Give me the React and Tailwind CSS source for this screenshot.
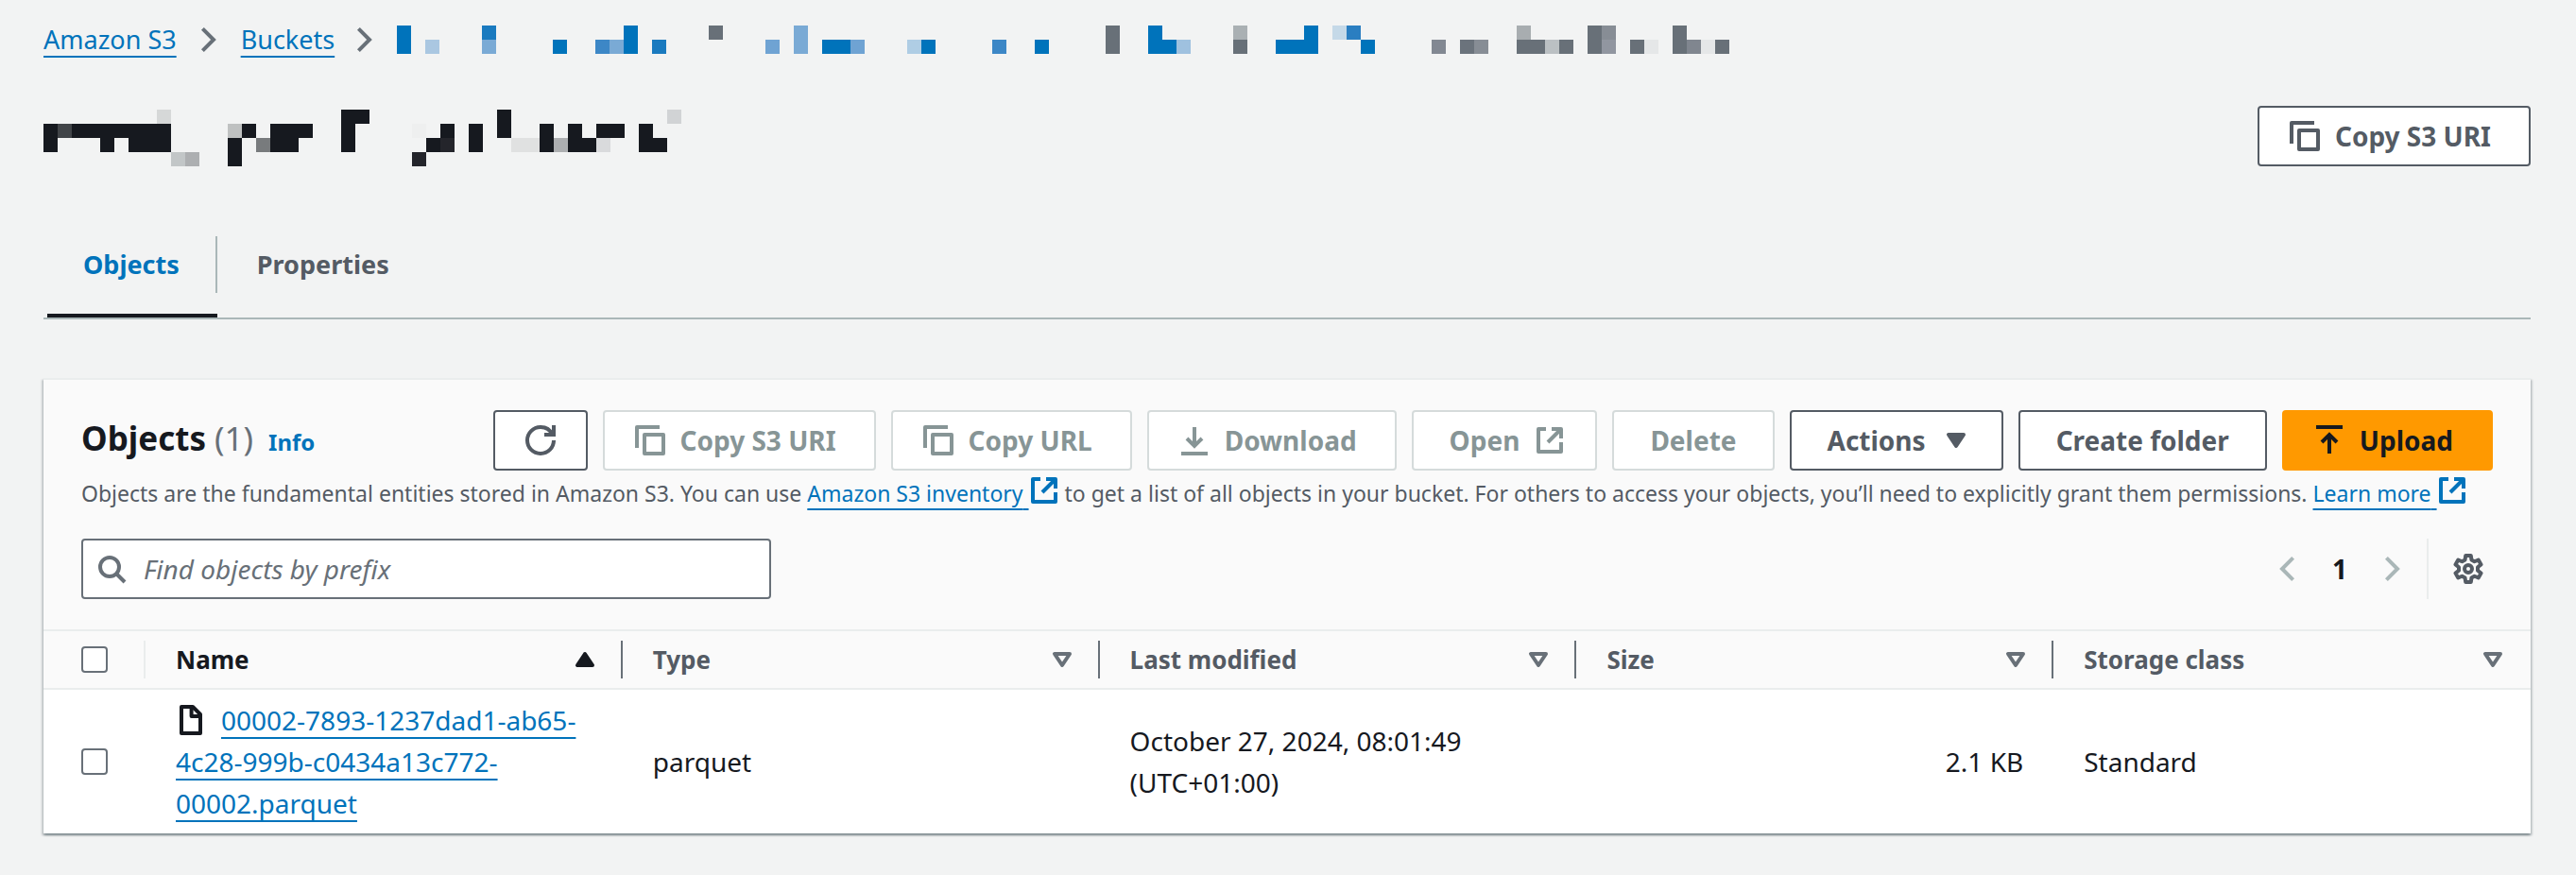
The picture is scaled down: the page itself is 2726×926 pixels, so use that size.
import { useState } from "react";

const INK = "#16191f";
const BLUE = "#0073bb";
const GRAY = "#687078";

// [column, row, colour, columns wide, rows tall]
const pathBlocks = [
  [0, 0, BLUE, 1, 2], [2, 1, "#aac7e1"], [6, 0, "#1a7abf"], [6, 1, "#7aaad5"],
  [11, 1, BLUE], [14, 1, "#3d87c6"], [15, 1, "#7aaad5"], [16, 0, BLUE, 1, 2],
  [18, 1, "#1a7abf"], [22, 0, GRAY], [26, 1, "#6fa3d3"], [28, 0, "#7aaad5", 1, 2],
  [30, 1, BLUE, 2], [32, 1, "#6fa3d3"], [36, 1, "#afcde4"], [37, 1, BLUE],
  [42, 1, "#3d87c6"], [45, 1, BLUE], [50, 0, GRAY, 1, 2], [53, 0, BLUE, 1, 2],
  [54, 1, BLUE], [55, 1, "#9fc1df"], [59, 0, "#aab0b3"], [59, 1, GRAY],
  [62, 1, BLUE, 2], [64, 0, BLUE, 1, 2], [66, 0, "#c5d9e8"], [67, 0, "#2a7ec1"],
  [68, 1, BLUE], [73, 1, "#828892"], [75, 1, "#6b737c"], [76, 1, "#878d95"],
  [79, 0, "#a8adb0"], [79, 1, GRAY, 2], [81, 1, "#bbc0c3"], [82, 1, GRAY],
  [84, 0, GRAY, 1, 2], [85, 0, "#878d95"], [85, 1, "#9196a0"], [87, 1, GRAY],
  [88, 1, "#e5e7e8"], [90, 0, GRAY, 1, 2], [91, 1, "#80868f"], [92, 1, "#e5e7e8"],
  [93, 1, GRAY],
];

const titleBlocks = [
  [8, 0, "#d6d8d8"], [21, 0, INK, 2], [32, 0, INK, 1, 2], [44, 0, "#d1d3d5"],
  [0, 1, INK, 1, 2], [1, 1, "#414448"], [2, 1, INK, 7], [13, 1, "#bfc1c1"],
  [14, 1, INK], [16, 1, INK, 3], [21, 1, INK, 1, 2], [26, 1, "#eeefef"],
  [28, 1, INK], [30, 1, INK, 1, 2], [35, 1, INK, 1, 2], [37, 1, INK, 1, 2],
  [39, 1, INK, 2], [42, 1, INK, 1, 2], [4, 2, INK], [6, 2, INK, 3],
  [13, 2, INK, 1, 2], [15, 2, "#787b7d"], [16, 2, INK, 2], [27, 2, INK],
  [28, 2, "#24252b"], [33, 2, "#e0e1e1", 2], [36, 2, "#adafb1"], [38, 2, INK],
  [39, 2, "#d9dadc"], [43, 2, INK], [9, 3, "#c2c6c7"], [10, 3, "#adafb1"],
  [26, 3, "#24252b"],
];

function Mosaic({ blocks, cols, rows }) {
  return (
    <svg
      width={cols * 15}
      height={rows * 15}
      viewBox={`0 0 ${cols} ${rows}`}
      shapeRendering="crispEdges"
      aria-hidden="true"
      className="shrink-0"
    >
      {blocks.map(([x, y, fill, w = 1, h = 1]) => (
        <rect key={`${x}-${y}`} x={x} y={y} width={w} height={h} fill={fill} />
      ))}
    </svg>
  );
}

const icons = {
  copy: (
    <>
      <path d="M1 12V1h12" />
      <path d="M5 5h10v10H5z" />
    </>
  ),
  refresh: (
    <>
      <path d="M10 5h5V0" strokeLinejoin="miter" />
      <path d="M15 8a6.957 6.957 0 0 1-7 7 6.957 6.957 0 0 1-7-7 6.957 6.957 0 0 1 7-7 6.87 6.87 0 0 1 6.3 4" />
    </>
  ),
  external: (
    <>
      <path d="M9 2h5v5" />
      <path d="m7 9 7-7" />
      <path d="M14 9.05V14H2V2h4" />
    </>
  ),
  download: (
    <>
      <path d="M1 15h14" />
      <path d="M8 1v10" />
      <path d="m4 7 4 4 4-4" strokeLinejoin="miter" />
    </>
  ),
  upload: (
    <>
      <path d="M1 1h14" />
      <path d="M8 15V5" />
      <path d="m4 9 4-4 4 4" strokeLinejoin="miter" />
    </>
  ),
  search: (
    <>
      <circle cx="7" cy="7" r="5" />
      <path d="m15 15-4.5-4.5" />
    </>
  ),
  right: <path d="M4.7 2.2 10.5 8l-5.800 5.800" strokeLinejoin="miter" />,
  left: <path d="M11.300 2.200 5.500 8l5.800 5.800" strokeLinejoin="miter" />,
  file: (
    <>
      <path d="M3 1h6l4 4v10H3z" />
      <path d="M8.300 1v5H13" />
    </>
  ),
  caret: <path d="M4 5h8l-4 6z" fill="currentColor" />,
  sortUp: <path d="M4 11h8L8 5z" fill="currentColor" />,
  sort: <path d="M4 5h8l-4 6z" />,
  gear: (
    <>
      <path d="M6.600 1h2.800l.32 2.220 1.560.9 2.080-.83 1.400 2.420L13 7.100v1.800l1.760 1.390-1.400 2.420-2.080-.83-1.560.9L9.400 15H6.600l-.32-2.220-1.560-.9-2.080.83-1.400-2.420L3 8.900V7.100L1.240 5.710l1.400-2.420 2.080.83 1.560-.9z" />
      <circle cx="8" cy="8" r="2" />
    </>
  ),
};

function Icon({ name, className = "" }) {
  return (
    <svg
      viewBox="0 0 16 16"
      fill="none"
      stroke="currentColor"
      strokeWidth="2"
      strokeLinejoin="round"
      aria-hidden="true"
      className={`inline-block size-8 shrink-0 ${className}`}
    >
      {icons[name]}
    </svg>
  );
}

function Button({ icon, iconAfter, primary, disabled, children }) {
  const tone = primary
    ? "border-[#ff9900] bg-[#ff9900] text-[#16191f]"
    : disabled
    ? "border-[#d5dbdb] bg-white text-[#879596]"
    : "border-[#545b64] bg-white text-[#545b64]";

  return (
    <button
      disabled={disabled}
      className={`flex h-16 shrink-0 items-center gap-4 whitespace-nowrap rounded-sm border-2 text-[28px] font-bold ${
        icon ? "pr-10 pl-8" : iconAfter ? "pr-8 pl-[38px]" : "px-[38px]"
      } ${tone}`}
    >
      {icon && <Icon name={icon} />}
      {children}
      {iconAfter && <Icon name={iconAfter} />}
    </button>
  );
}

function Link({ children }) {
  return (
    <a
      href="#"
      className="text-[#0073bb] underline decoration-2 underline-offset-[7px] [text-decoration-skip-ink:none]"
    >
      {children}
    </a>
  );
}

function ExternalLink({ children }) {
  return (
    <span className="whitespace-nowrap">
      <Link>{children}&nbsp;</Link>
      <Icon name="external" className="align-[-4px] text-[#0073bb]" />
    </span>
  );
}

function Checkbox({ label }) {
  return (
    <input
      type="checkbox"
      aria-label={label}
      className="block size-7 appearance-none rounded-sm border-2 border-[#687078] bg-white checked:bg-[#0073bb]"
    />
  );
}

const columns = ["Name", "Type", "Last modified", "Size", "Storage class"];

export default function App() {
  const [tab, setTab] = useState("Objects");
  const [query, setQuery] = useState("");

  return (
    <div className="min-h-screen bg-[#f2f3f3] pt-5 pr-12 pb-11 pl-[46px] font-['Noto_Sans',sans-serif] text-[28px] leading-[44px] text-[#16191f]">
      <nav className="flex items-center text-[27px]">
        <Link>Amazon S3</Link>
        <Icon name="right" className="mx-[18px] text-[#687078]" />
        <Link>Buckets</Link>
        <Icon name="right" className="mr-[18px] ml-4 text-[#687078]" />
        <Mosaic blocks={pathBlocks} cols={94} rows={2} />
      </nav>

      <header className="mt-12 flex items-end justify-between">
        <h1>
          <Mosaic blocks={titleBlocks} cols={45} rows={4} />
        </h1>
        <Button icon="copy">Copy S3 URI</Button>
      </header>

      <div role="tablist" className="mt-[74px] flex border-b-2 border-[#aab7b8]">
        {["Objects", "Properties"].map((name, i) => (
          <div key={name} className={`flex flex-col ${i === 0 ? "ml-1" : ""}`}>
            <button
              role="tab"
              aria-selected={tab === name}
              onClick={() => setTab(name)}
              className={`h-[60px] text-[27px] font-bold ${
                i === 0 ? "border-r-2 border-[#aab7b8] px-[38px]" : "px-[42px]"
              } ${tab === name ? "text-[#0073bb]" : "text-[#545b64]"}`}
            >
              {name}
            </button>
            <div className={`mt-[22px] h-1 ${tab === name ? "bg-[#16191f]" : ""}`} />
          </div>
        ))}
      </div>

      <section className="mt-[62px] border-t-2 border-[#eaeded] bg-white shadow-[0_2px_2px_0_rgba(0,28,36,0.3),2px_2px_2px_0_rgba(0,28,36,0.15),-2px_2px_2px_0_rgba(0,28,36,0.15)]">
        <div className="bg-[#fafafa] px-10 py-8">
          <div className="flex items-center justify-between">
            <div className="flex items-baseline">
              <h2 className="text-[35px] font-bold">
                Objects <span className="font-normal text-[#687078]">(1)</span>
              </h2>
              <a href="#" className="ml-4 text-[24px] font-bold text-[#0073bb]">
                Info
              </a>
            </div>
            <div className="flex gap-4">
              <button
                aria-label="Refresh"
                className="flex h-16 w-[100px] items-center justify-center rounded-sm border-2 border-[#545b64] bg-white text-[#545b64]"
              >
                <Icon name="refresh" />
              </button>
              <Button icon="copy" disabled>Copy S3 URI</Button>
              <Button icon="copy" disabled>Copy URL</Button>
              <Button icon="download" disabled>Download</Button>
              <Button iconAfter="external" disabled>Open</Button>
              <Button disabled>Delete</Button>
              <Button iconAfter="caret">Actions</Button>
              <Button>Create folder</Button>
              <Button icon="upload" primary>Upload</Button>
            </div>
          </div>

          <p className="mt-0.5 text-[23px] text-[#545b64]">
            Objects are the fundamental entities stored in Amazon S3. You can use{" "}
            <ExternalLink>Amazon S3 inventory</ExternalLink> to get a list of all objects in your
            bucket. For others to access your objects, you’ll need to explicitly grant them
            permissions. <ExternalLink>Learn more</ExternalLink>
          </p>

          <div className="mt-[26px] flex items-center justify-between">
            <label className="flex h-16 w-[730px] items-center gap-[18px] rounded-sm border-2 border-[#687078] bg-white px-3.5 text-[#687078]">
              <Icon name="search" />
              <input
                type="text"
                value={query}
                onChange={(e) => setQuery(e.target.value)}
                aria-label="Find objects by prefix"
                placeholder="Find objects by prefix"
                className="min-w-0 flex-1 outline-none placeholder:text-[#687078] placeholder:italic"
              />
            </label>

            <div className="flex h-16 items-center">
              <button aria-label="Previous page" className="flex text-[#aab7b8]">
                <Icon name="left" />
              </button>
              <button className="mx-8 font-bold">1</button>
              <button aria-label="Next page" className="flex text-[#aab7b8]">
                <Icon name="right" />
              </button>
              <div className="ml-5 h-16 border-l-2 border-[#eaeded]" />
              <button aria-label="Preferences" className="mr-2.5 ml-[26px] flex text-[#545b64]">
                <Icon name="gear" />
              </button>
            </div>
          </div>
        </div>

        <table className="w-full table-fixed border-collapse text-left">
          <thead className="border-y-2 border-[#eaeded] bg-[#fafafa] text-[26px]">
            <tr>
              <th className="w-[108px] py-[10px] pl-10">
                <div className="flex h-10 items-center border-r-2 border-[#eaeded]">
                  <Checkbox label="Select all objects" />
                </div>
              </th>
              {columns.map((name, i) => (
                <th
                  key={name}
                  aria-sort={i === 0 ? "ascending" : "none"}
                  className={`py-[10px] ${i === 0 ? "text-[#16191f]" : "text-[#545b64]"}`}
                >
                  <div
                    className={`flex h-10 items-center justify-between border-r-2 pr-[22px] pl-8 ${
                      i < columns.length - 1 ? "border-[#687078]" : "border-transparent"
                    }`}
                  >
                    {name}
                    <Icon
                      name={i === 0 ? "sortUp" : "sort"}
                      className={i === 0 ? "" : "text-[#687078]"}
                    />
                  </div>
                </th>
              ))}
            </tr>
          </thead>
          <tbody>
            <tr>
              <td className="py-2.5 pl-10">
                <Checkbox label="Select 00002-7893-1237dad1-ab65-4c28-999b-c0434a13c772-00002.parquet" />
              </td>
              <td className="py-2.5 pr-8 pl-8">
                <Icon name="file" className="mr-4 align-[-5px]" />
                <Link>00002-7893-1237dad1-ab65-4c28-999b-c0434a13c772-00002.parquet</Link>
              </td>
              <td className="py-2.5 pr-8 pl-8">parquet</td>
              <td className="py-2.5 pr-8 pl-8">
                October 27, 2024, 08:01:49
                <br />
                (UTC+01:00)
              </td>
              <td className="py-2.5 pr-8 pl-8 text-right">2.1 KB</td>
              <td className="py-2.5 pr-8 pl-8">Standard</td>
            </tr>
          </tbody>
        </table>
      </section>
    </div>
  );
}
